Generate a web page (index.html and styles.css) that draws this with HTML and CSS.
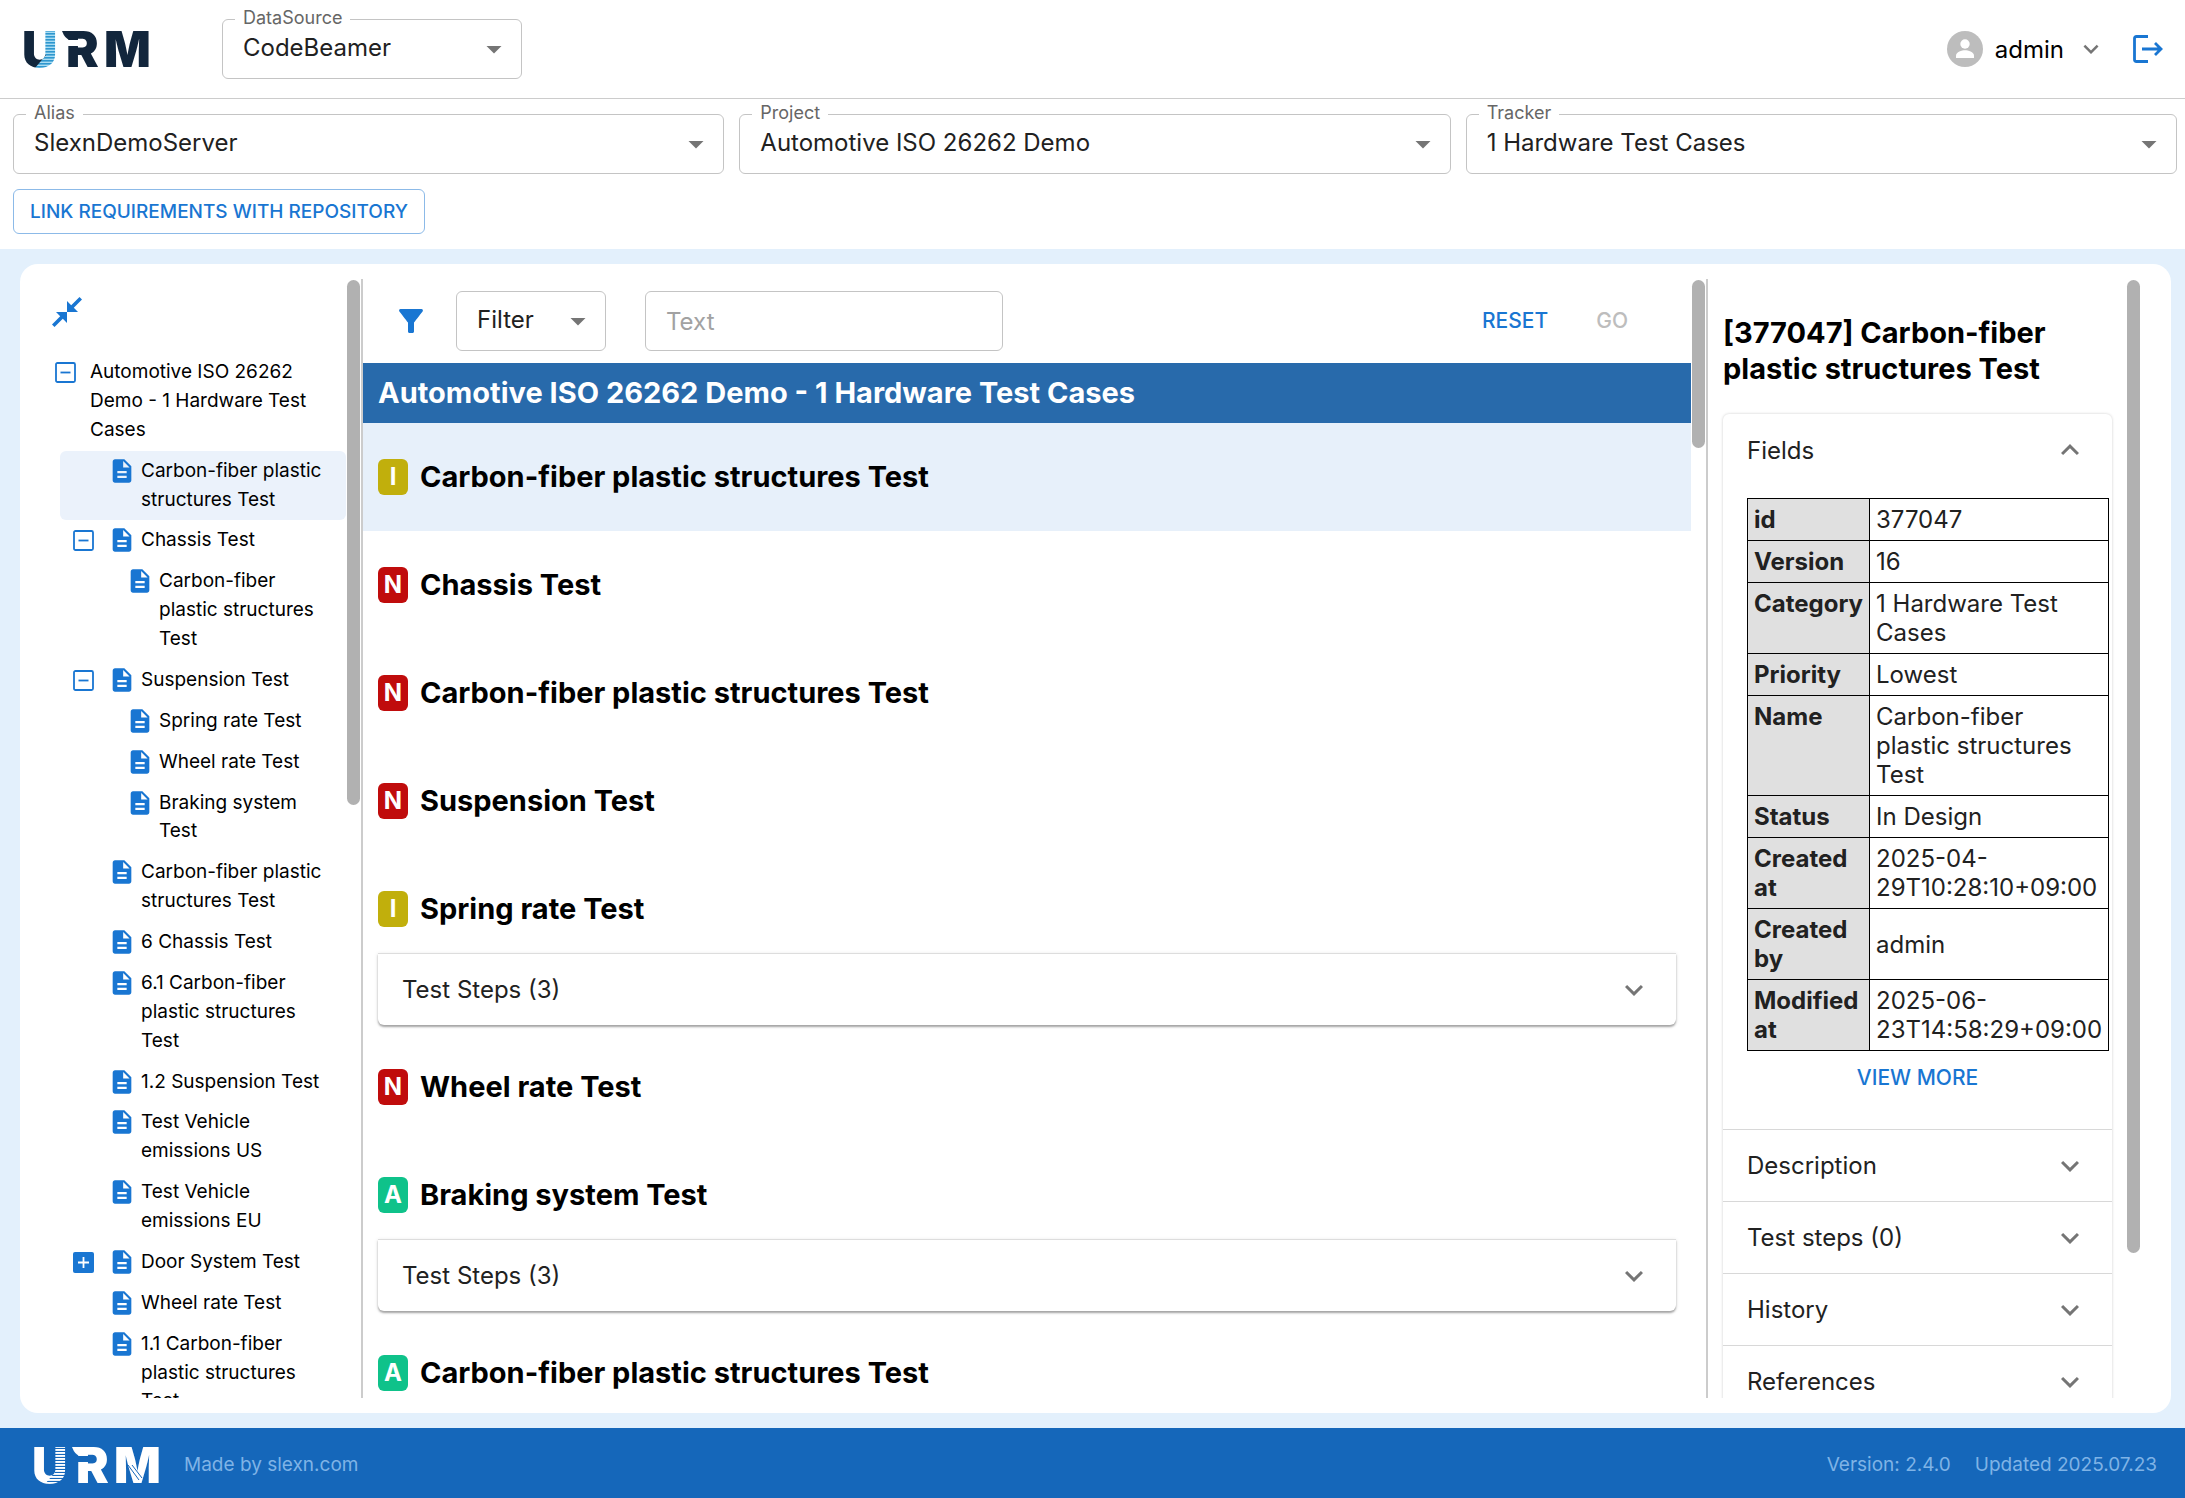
FILE: index.html
```html
<!DOCTYPE html>
<html lang="en">
<head>
    <meta charset="UTF-8">
    <title>URM</title>
    <link rel="stylesheet" href="styles.css">
</head>
<body>
    <!-- Shared icons -->
    <svg class="icon-defs" xmlns="http://www.w3.org/2000/svg">
        <symbol id="icon-arrow" viewBox="0 0 24 24"><path d="M7 10l5 5 5-5z"/></symbol>
        <symbol id="icon-more" viewBox="0 0 24 24"><path d="M16.59 8.59 12 13.17 7.41 8.59 6 10l6 6 6-6z"/></symbol>
        <symbol id="icon-less" viewBox="0 0 24 24"><path d="m12 8-6 6 1.41 1.41L12 10.83l4.59 4.58L18 14z"/></symbol>
        <symbol id="icon-doc" viewBox="0 0 24 24"><path d="M14 2H6c-1.1 0-1.99.9-1.99 2L4 20c0 1.1.89 2 1.99 2H18c1.1 0 2-.9 2-2V8l-6-6zm2 16H8v-2h8v2zm0-4H8v-2h8v2zm-3-5V3.5L18.5 9H13z"/></symbol>
        <symbol id="icon-minus" viewBox="0 0 21 21"><rect x="1" y="1" width="19" height="19" rx="1.5" fill="none" stroke="currentColor" stroke-width="1.8"/><path d="M5.500 9.600h10v1.800h-10z"/></symbol>
        <symbol id="icon-plus" viewBox="0 0 21 21"><rect width="21" height="21" rx="2"/><path d="M5 10.500h11M10.500 5v11" stroke="#fff" stroke-width="1.800"/></symbol>
        <!-- Striped right half of the U in the logo -->
        <pattern id="stripes" width="4" height="3" patternUnits="userSpaceOnUse"><rect width="4" height="3" fill="#a9dcf2"/><rect width="4" height="1.600" fill="#2e97cf"/></pattern>
        <pattern id="stripes-light" width="4" height="3" patternUnits="userSpaceOnUse"><rect width="4" height="1.900" fill="#fff"/></pattern>
        <pattern id="ribbon" width="126" height="60" patternUnits="userSpaceOnUse"><rect width="126" height="60" fill="url(#stripes)"/><path d="M0 0H17V23L22 25 11 38H0Z" fill="#12263c"/></pattern>
        <pattern id="ribbon-light" width="126" height="60" patternUnits="userSpaceOnUse"><rect width="126" height="60" fill="url(#stripes-light)"/><path d="M0 0H17V23L22 25 11 38H0Z" fill="#fff"/></pattern>
    </svg>

    <header class="header">
        <svg class="logo" viewBox="-4 -12 132 62" role="img" aria-label="URM">
            <g class="logo-text" fill="#12263c">
                <text x="-2" y="37" fill="url(#ribbon)">U</text>
                <text x="42" y="37">R</text>
                <text x="80" y="37">M</text>
                <path d="M38 1H50V10H46Q41 9 38 1Z"/>
            </g>
            <path d="M43 10H55V16H43Z" fill="#fff"/>
        </svg>
        <div class="field field-source">
            <label for="datasource">DataSource</label>
            <select id="datasource"><option>CodeBeamer</option></select>
            <svg class="arrow"><use href="#icon-arrow"/></svg>
        </div>
        <div class="user">
            <button class="user-menu" type="button">
                <svg class="avatar" viewBox="0 0 36 36"><circle cx="18" cy="18" r="18" fill="#bdbdbd"/><circle cx="18" cy="13" r="4.700" fill="#fff"/><path d="M9 27v-2.500c0-3.500 6-5.200 9-5.200s9 1.700 9 5.200V27z" fill="#fff"/></svg>
                admin
                <svg class="user-arrow"><use href="#icon-more"/></svg>
            </button>
            <button class="logout" type="button" aria-label="Log out">
                <svg viewBox="0 0 30 30"><path d="M15 2.500H3.500Q1.500 2.500 1.500 4.500V25.500Q1.500 27.500 3.500 27.500H15M9 15H28M22 9l6 6-6 6" fill="none" stroke="currentColor" stroke-width="2.800"/></svg>
            </button>
        </div>
    </header>

    <div class="selectors">
        <div class="selector-row">
            <div class="field">
                <label for="alias">Alias</label>
                <select id="alias"><option>SlexnDemoServer</option></select>
                <svg class="arrow"><use href="#icon-arrow"/></svg>
            </div>
            <div class="field">
                <label for="project">Project</label>
                <select id="project"><option>Automotive ISO 26262 Demo</option></select>
                <svg class="arrow"><use href="#icon-arrow"/></svg>
            </div>
            <div class="field">
                <label for="tracker">Tracker</label>
                <select id="tracker"><option>1 Hardware Test Cases</option></select>
                <svg class="arrow"><use href="#icon-arrow"/></svg>
            </div>
        </div>
        <button class="link-button" type="button">LINK REQUIREMENTS WITH REPOSITORY</button>
    </div>

    <main class="main">
        <div class="card">
            <!-- Tree -->
            <nav class="panel tree-panel">
                <div class="panel-content">
                    <button class="collapse" type="button" aria-label="Collapse all">
                        <svg viewBox="0 0 30 30"><path d="M15 15V4l4.200 4.200L27.500 0 30 2.500l-8.200 8.200L26 15zM15 15v11l-4.200-4.200L2.500 30 0 27.500l8.200-8.200L4 15z"/></svg>
                    </button>
                    <ul class="tree">
                        <li class="node root"><svg class="toggle"><use href="#icon-minus"/></svg><span>Automotive ISO 26262 Demo - 1 Hardware Test Cases</span></li>
                        <li class="node selected"><span class="toggle"></span><svg class="doc"><use href="#icon-doc"/></svg><span>Carbon-fiber plastic structures Test</span></li>
                        <li class="node"><svg class="toggle"><use href="#icon-minus"/></svg><svg class="doc"><use href="#icon-doc"/></svg><span>Chassis Test</span></li>
                        <li class="node child"><span class="toggle"></span><svg class="doc"><use href="#icon-doc"/></svg><span>Carbon-fiber plastic structures Test</span></li>
                        <li class="node"><svg class="toggle"><use href="#icon-minus"/></svg><svg class="doc"><use href="#icon-doc"/></svg><span>Suspension Test</span></li>
                        <li class="node child"><span class="toggle"></span><svg class="doc"><use href="#icon-doc"/></svg><span>Spring rate Test</span></li>
                        <li class="node child"><span class="toggle"></span><svg class="doc"><use href="#icon-doc"/></svg><span>Wheel rate Test</span></li>
                        <li class="node child"><span class="toggle"></span><svg class="doc"><use href="#icon-doc"/></svg><span>Braking system Test</span></li>
                        <li class="node"><span class="toggle"></span><svg class="doc"><use href="#icon-doc"/></svg><span>Carbon-fiber plastic structures Test</span></li>
                        <li class="node"><span class="toggle"></span><svg class="doc"><use href="#icon-doc"/></svg><span>6 Chassis Test</span></li>
                        <li class="node"><span class="toggle"></span><svg class="doc"><use href="#icon-doc"/></svg><span>6.1 Carbon-fiber plastic structures Test</span></li>
                        <li class="node"><span class="toggle"></span><svg class="doc"><use href="#icon-doc"/></svg><span>1.2 Suspension Test</span></li>
                        <li class="node"><span class="toggle"></span><svg class="doc"><use href="#icon-doc"/></svg><span>Test Vehicle emissions US</span></li>
                        <li class="node"><span class="toggle"></span><svg class="doc"><use href="#icon-doc"/></svg><span>Test Vehicle emissions EU</span></li>
                        <li class="node"><svg class="toggle"><use href="#icon-plus"/></svg><svg class="doc"><use href="#icon-doc"/></svg><span>Door System Test</span></li>
                        <li class="node"><span class="toggle"></span><svg class="doc"><use href="#icon-doc"/></svg><span>Wheel rate Test</span></li>
                        <li class="node"><span class="toggle"></span><svg class="doc"><use href="#icon-doc"/></svg><span>1.1 Carbon-fiber plastic structures Test</span></li>
                    </ul>
                </div>
                <div class="scrollbar"><div class="thumb thumb-tree"></div></div>
            </nav>

            <!-- Test cases -->
            <section class="panel">
                <div class="panel-content">
                    <form class="toolbar">
                        <svg class="filter-icon" viewBox="0 0 24 24"><path d="M4.250 5.610C6.270 8.200 10 13 10 13v6c0 .55.45 1 1 1h2c.55 0 1-.45 1-1v-6s3.720-4.800 5.740-7.390c.51-.66.04-1.610-.79-1.610H5.040c-.83 0-1.300.95-.79 1.610z"/></svg>
                        <div class="field field-filter">
                            <select aria-label="Filter"><option>Filter</option></select>
                            <svg class="arrow"><use href="#icon-arrow"/></svg>
                        </div>
                        <input class="text-input" type="text" placeholder="Text" aria-label="Text">
                        <div class="toolbar-actions">
                            <button class="text-button" type="button">RESET</button>
                            <button class="text-button" type="submit" disabled>GO</button>
                        </div>
                    </form>
                    <h2 class="title-bar">Automotive ISO 26262 Demo - 1 Hardware Test Cases</h2>
                    <article class="item selected"><h3><span class="badge badge-i">I</span>Carbon-fiber plastic structures Test</h3></article>
                    <article class="item"><h3><span class="badge badge-n">N</span>Chassis Test</h3></article>
                    <article class="item"><h3><span class="badge badge-n">N</span>Carbon-fiber plastic structures Test</h3></article>
                    <article class="item"><h3><span class="badge badge-n">N</span>Suspension Test</h3></article>
                    <article class="item with-steps">
                        <h3><span class="badge badge-i">I</span>Spring rate Test</h3>
                        <button class="summary steps" type="button">Test Steps (3)<svg><use href="#icon-more"/></svg></button>
                    </article>
                    <article class="item"><h3><span class="badge badge-n">N</span>Wheel rate Test</h3></article>
                    <article class="item with-steps">
                        <h3><span class="badge badge-a">A</span>Braking system Test</h3>
                        <button class="summary steps" type="button">Test Steps (3)<svg><use href="#icon-more"/></svg></button>
                    </article>
                    <article class="item"><h3><span class="badge badge-a">A</span>Carbon-fiber plastic structures Test</h3></article>
                </div>
                <div class="scrollbar"><div class="thumb thumb-list"></div></div>
            </section>

            <!-- Details -->
            <aside class="panel details-panel">
                <div class="panel-content details">
                    <h2>[377047] Carbon-fiber plastic structures Test</h2>
                    <div class="accordion">
                        <button class="summary" type="button">Fields<svg><use href="#icon-less"/></svg></button>
                        <div class="fields">
                            <table>
                                <tr><th>id</th><td>377047</td></tr>
                                <tr><th>Version</th><td>16</td></tr>
                                <tr><th>Category</th><td>1 Hardware Test Cases</td></tr>
                                <tr><th>Priority</th><td>Lowest</td></tr>
                                <tr><th>Name</th><td>Carbon-fiber plastic structures Test</td></tr>
                                <tr><th>Status</th><td>In Design</td></tr>
                                <tr><th>Created at</th><td>2025-04-29T10:28:10+09:00</td></tr>
                                <tr><th>Created by</th><td>admin</td></tr>
                                <tr><th>Modified at</th><td>2025-06-23T14:58:29+09:00</td></tr>
                            </table>
                            <button class="text-button view-more" type="button">VIEW MORE</button>
                        </div>
                        <button class="summary" type="button">Description<svg><use href="#icon-more"/></svg></button>
                        <button class="summary" type="button">Test steps (0)<svg><use href="#icon-more"/></svg></button>
                        <button class="summary" type="button">History<svg><use href="#icon-more"/></svg></button>
                        <button class="summary" type="button">References<svg><use href="#icon-more"/></svg></button>
                    </div>
                </div>
                <div class="scrollbar"><div class="thumb thumb-details"></div></div>
            </aside>
        </div>
    </main>

    <footer class="footer">
        <svg class="logo" viewBox="-4 -12 132 62" role="img" aria-label="URM">
            <g class="logo-text" fill="#fff">
                <text x="-2" y="37" fill="url(#ribbon-light)">U</text>
                <text x="42" y="37">R</text>
                <text x="80" y="37">M</text>
                <path d="M38 1H50V10H46Q41 9 38 1Z"/>
            </g>
            <path d="M43 10H55V16H43Z" fill="#1567ba"/>
            <path d="M94 19L105 34M98 19L108 32" stroke="#1567ba" stroke-width="1"/>
        </svg>
        <span>Made by slexn.com</span>
        <span class="version">Version: 2.4.0</span>
        <span>Updated 2025.07.23</span>
    </footer>
</body>
</html>
```
FILE: styles.css
```css
* {
    box-sizing: border-box;
}

body {
    display: flex;
    flex-direction: column;
    height: 100vh;
    margin: 0;
    font-family: Inter, Roboto, sans-serif;
    font-size: 24px;
    color: #000;
    background-color: #fff;
}

button,
input,
select {
    font: inherit;
}

button {
    padding: 0;
    border: none;
    background: none;
    color: inherit;
    cursor: pointer;
}

svg {
    display: block;
    flex: none;
    fill: currentColor;
}

.icon-defs {
    position: absolute;
    width: 0;
    height: 0;
}

/* Header */
.header {
    display: flex;
    align-items: center;
    height: 99px;
    padding: 0 22px 0 20px;
    border-bottom: 1px solid #ccc;
}

.logo {
    width: 132px;
    height: 62px;
}

.logo-text {
    font-size: 49px;
    font-weight: 900;
}

.field {
    position: relative;
    flex: 1;
}

.field-source {
    flex: none;
    width: 300px;
    margin-left: 70px;
}

.field label {
    position: absolute;
    top: -12px;
    left: 13px;
    padding: 0 8px;
    background-color: #fff;
    color: #666;
    font-size: 18px;
    line-height: 22px;
}

.field select {
    display: block;
    appearance: none;
    width: 100%;
    height: 60px;
    padding: 0 48px 3px 20px;
    border: 1px solid #c4c4c4;
    border-radius: 6px;
    background: none;
    color: #212121;
}

.arrow {
    position: absolute;
    top: 12px;
    right: 10px;
    width: 36px;
    height: 36px;
    fill: #757575;
    pointer-events: none;
}

.user {
    display: flex;
    align-items: center;
    gap: 27px;
    margin-left: auto;
}

.user-menu {
    display: flex;
    align-items: center;
    gap: 12px;
}

.avatar {
    width: 36px;
    height: 36px;
}

.user-arrow {
    width: 30px;
    height: 30px;
    fill: #757575;
}

.logout svg {
    width: 30px;
    height: 30px;
    color: #1976d2;
}

/* Alias, project and tracker */
.selectors {
    padding: 15px 8px 15px 13px;
}

.selector-row {
    display: flex;
    gap: 15px;
    margin-bottom: 15px;
}

.link-button {
    display: block;
    height: 45px;
    padding: 0 16px;
    border: 1px solid #8cbae8;
    border-radius: 6px;
    color: #1976d2;
    font-size: 19px;
    font-weight: 500;
}

/* Main card */
.main {
    flex: 1;
    min-height: 0;
    padding: 15px 14px 15px 20px;
    background-color: #e3f0fc;
}

.card {
    display: grid;
    grid-template-columns: 343px 1fr 463px;
    grid-template-rows: 100%;
    height: 100%;
    padding: 15px 0;
    border-radius: 18px;
    background-color: #fff;
}

.panel {
    display: flex;
    min-width: 0;
    border-right: 2px solid #ccc;
}

.details-panel {
    padding-right: 30px;
    border-right: none;
}

.panel-content {
    flex: 1;
    min-width: 0;
    overflow: hidden;
}

.scrollbar {
    width: 13px;
    margin: 1px 1px 0;
}

.thumb {
    border-radius: 7px;
    background-color: #b1b1b1;
}

.thumb-tree {
    height: 47%;
}

.thumb-list {
    height: 15%;
}

.thumb-details {
    height: 87%;
}

/* Tree */
.tree-panel {
    font-size: 19px;
    line-height: 1.52;
}

.collapse {
    display: block;
    margin: 18px 0 25px 32px;
    color: #1976d2;
}

.collapse svg {
    width: 30px;
    height: 30px;
}

.tree {
    margin: 0;
    padding: 0;
    list-style: none;
}

.node {
    display: flex;
    align-items: flex-start;
    margin-left: 40px;
    padding: 6px 16px 6px 13px;
    border-radius: 6px;
}

.node.selected {
    background-color: #ebf2fb;
}

.node.child {
    padding-left: 31px;
}

.node.root {
    padding-left: 0;
    margin-left: 35px;
}

.toggle {
    flex: none;
    width: 21px;
    height: 21px;
    margin: 4px 14px 0 0;
    color: #1976d2;
}

.doc {
    width: 28px;
    height: 28px;
    margin-right: 5px;
    color: #1976d2;
}

/* Test case list */
.toolbar {
    display: flex;
    align-items: center;
    height: 84px;
    padding: 0 48px 0 30px;
}

.filter-icon {
    width: 36px;
    height: 36px;
    color: #1976d2;
}

.field-filter {
    flex: none;
    width: 150px;
    margin: 0 39px 0 27px;
}

.text-input {
    width: 358px;
    height: 60px;
    padding: 0 20px;
    border: 1px solid #c4c4c4;
    border-radius: 6px;
}

.text-input::placeholder {
    color: #a2a2a2;
}

.toolbar-actions {
    display: flex;
    gap: 18px;
    margin-left: auto;
}

.text-button {
    padding: 9px 15px;
    color: #1976d2;
    font-size: 21px;
    font-weight: 500;
    line-height: 36px;
}

.text-button:disabled {
    color: #bdbdbd;
}

.title-bar {
    margin: 0;
    padding: 0 15px;
    background-color: #286aab;
    color: #fff;
    font-size: 29px;
    font-weight: 700;
    line-height: 60px;
}

.item {
    padding: 36px 15px;
}

.item.selected {
    background-color: #e7f0fa;
}

.item.with-steps {
    padding-bottom: 8px;
}

.item h3 {
    display: flex;
    align-items: center;
    gap: 12px;
    margin: 0;
    font-size: 29px;
    font-weight: 700;
    line-height: 36px;
}

.badge {
    width: 30px;
    height: 36px;
    border-radius: 6px;
    color: #fff;
    font-size: 24px;
    font-weight: 700;
    text-align: center;
}

.badge-i {
    background-color: #c1af0c;
}

.badge-n {
    background-color: #c00c0c;
}

.badge-a {
    background-color: #0fc28a;
}

.summary {
    display: flex;
    align-items: center;
    justify-content: space-between;
    width: 100%;
    height: 72px;
    padding: 0 24px;
    color: #212121;
}

.summary svg {
    width: 36px;
    height: 36px;
    fill: #757575;
}

.steps {
    margin-top: 26px;
    border-top: 1px solid #ddd;
    border-radius: 0 0 6px 6px;
    box-shadow: 0 2px 2px rgba(0, 0, 0, 0.3), 0 1px 4px rgba(0, 0, 0, 0.12);
}

/* Details */
.details {
    padding: 36px 14px 0 15px;
}

.details h2 {
    margin: 0 0 27px;
    font-size: 29px;
    font-weight: 700;
    line-height: 36px;
}

.accordion {
    border-radius: 6px;
    box-shadow: 0 0 3px rgba(0, 0, 0, 0.2);
}

.fields {
    padding: 12px 24px 24px;
    color: #212121;
}

.fields + .summary,
.summary + .summary {
    border-top: 1px solid #d8d8d8;
}

.fields table {
    border-collapse: collapse;
    line-height: 29px;
}

.fields th,
.fields td {
    padding: 6px;
    border: 1px solid #000;
    text-align: left;
}

.fields th {
    background-color: #e0e0e0;
    font-weight: 700;
    vertical-align: top;
}

.view-more {
    display: block;
    margin: 0 auto;
}

/* Footer */
.footer {
    display: flex;
    align-items: center;
    height: 70px;
    padding: 3px 28px 0 30px;
    background-color: #1567ba;
    color: #7fb3e6;
    font-size: 19px;
}

.footer .logo {
    margin-right: 22px;
}

.version {
    margin: 0 24px 0 auto;
}
```
